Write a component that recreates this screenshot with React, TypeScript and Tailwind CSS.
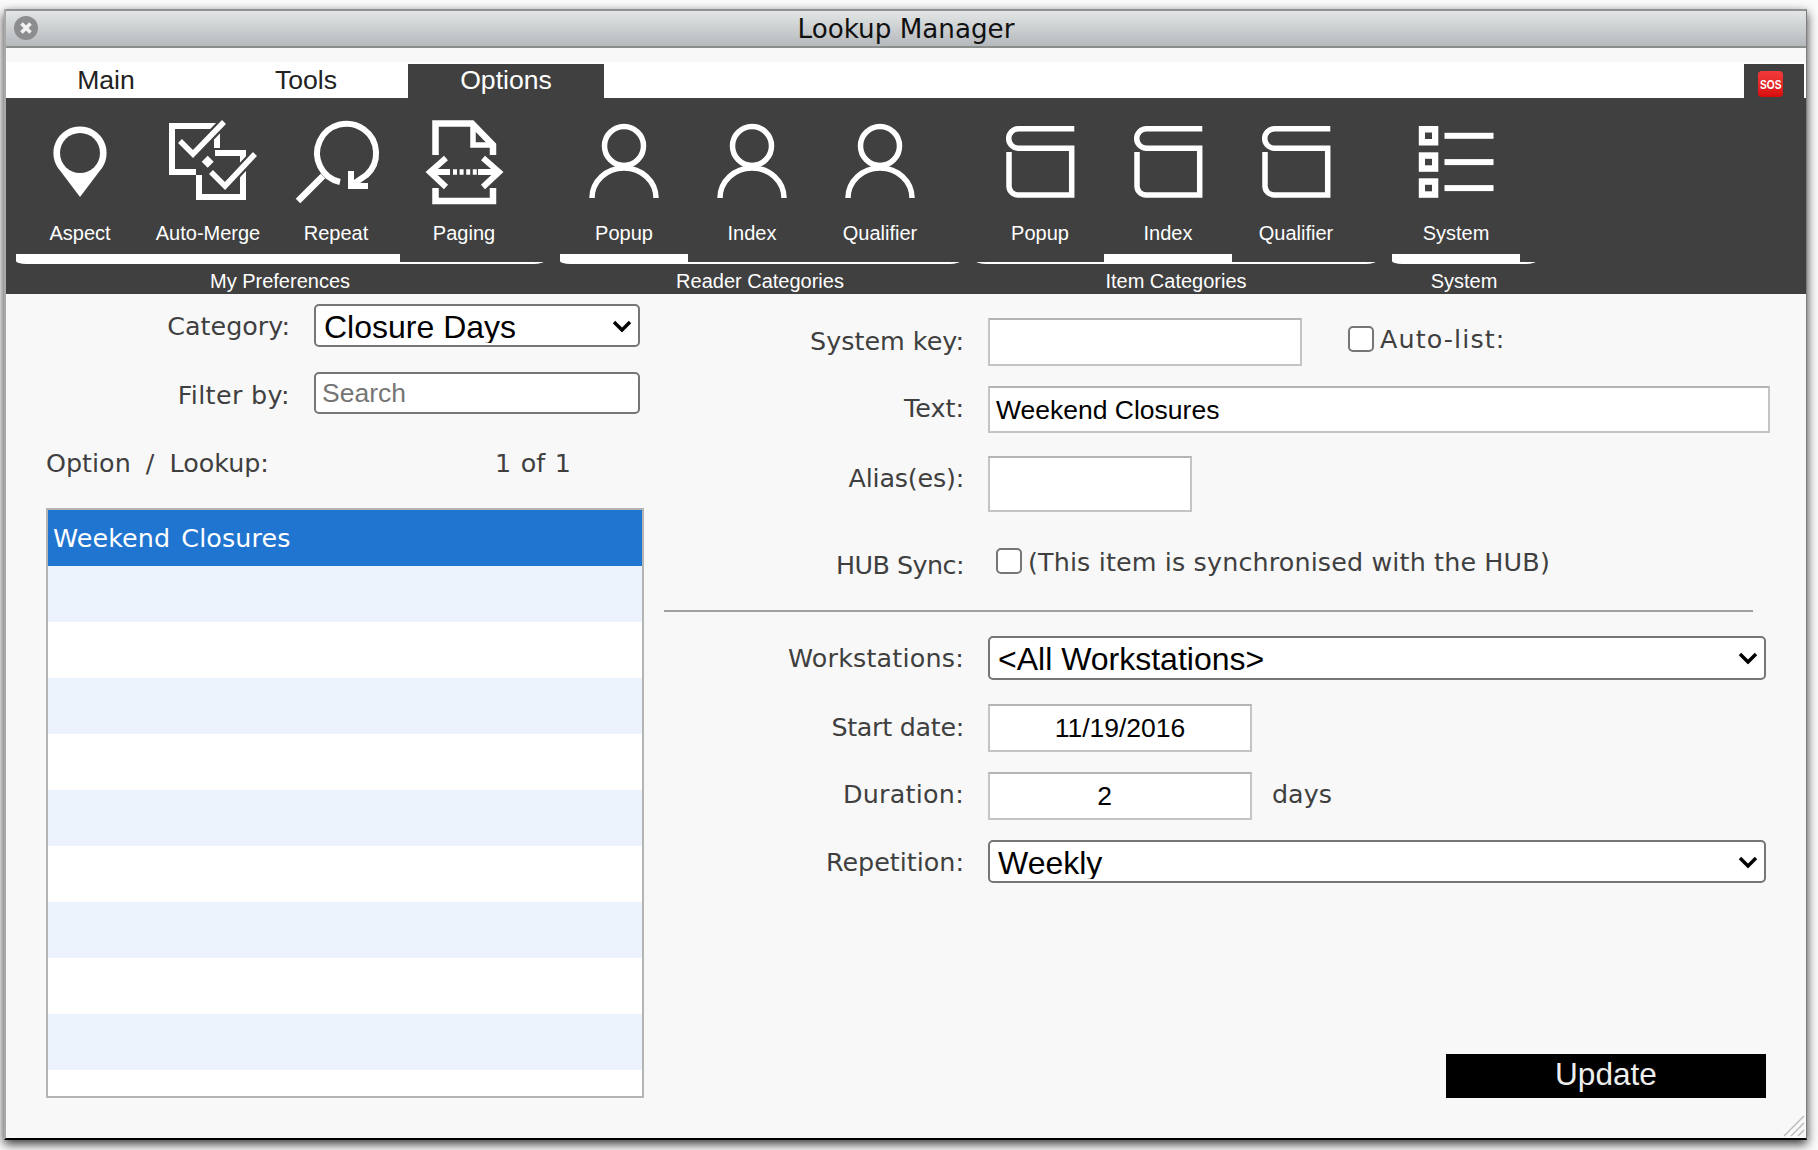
import { ReactNode } from "react";

const BG = "#404040";

const AspectIcon = () => (
  <>
    <path d="M64 8.5A26.5 26.5 0 0 1 84 52.5L64 79L44 52.5A26.5 26.5 0 0 1 64 8.5Z" fill="#fff" />
    <circle cx="64" cy="35" r="20" fill={BG} />
  </>
);

const MergeIcon = () => (
  <g fill="none" stroke="#fff" strokeWidth="6">
    <path d="M73 30V8H28V54H52" />
    <path d="M71 35H99V79H55V57" />
    <path d="M36 23L49 36L80 4" stroke={BG} strokeWidth="10" />
    <path d="M67 54L81 68L111 36" stroke={BG} strokeWidth="10" />
    <path d="M36 23L49 36L80 4" strokeWidth="5.5" />
    <path d="M67 54L81 68L111 36" strokeWidth="5.5" />
    <rect x="59.5" y="39.5" width="8.5" height="8.5" fill="#fff" stroke="none" transform="rotate(45 63.7 43.7)" />
  </g>
);

const RepeatIcon = () => (
  <g fill="none" stroke="#fff" strokeWidth="6">
    <path d="M68 64A29.5 29.5 0 1 1 94.5 57L80 67" />
    <path d="M79 53V68H96" />
    <path d="M51 58L26 83" strokeWidth="6.5" />
  </g>
);

const PagingIcon = () => (
  <g fill="none" stroke="#fff" strokeWidth="6.5">
    <path d="M35.5 37V5.5H72L93 27V37" />
    <path d="M35.5 70V83H93V70" />
    <path d="M73 5.5V27H93" strokeWidth="5.5" />
    <path d="M46 40L30 54L46 69" strokeWidth="6" />
    <path d="M83 40L99 54L83 69" strokeWidth="6" />
    <path d="M29 54H50M78 54H99" strokeWidth="6" />
    <path d="M53 54H77" strokeWidth="5.5" strokeDasharray="4 2.6" />
  </g>
);

const PersonIcon = () => (
  <g fill="none" stroke="#fff" strokeWidth="5.5">
    <circle cx="64" cy="28" r="19.5" />
    <path d="M32 80A32 30 0 0 1 96 80" />
  </g>
);

const WindowIcon = () => (
  <path
    d="M98.3 10.7H42.5A9.8 9.8 0 0 0 42.5 30.3H95.7V77H42A9 9 0 0 1 33 68V34"
    fill="none"
    stroke="#fff"
    strokeWidth="5.5"
  />
);

const ListIcon = () => (
  <g>
    {[8, 34.3, 60.3].map((y) => (
      <g key={y}>
        <rect x="26.8" y={y} width="19.5" height="19.5" fill="#fff" />
        <rect x="33" y={y + 6.5} width="7" height="6.5" fill={BG} />
        <rect x="52.5" y={y + 6.8} width="49" height="6" fill="#fff" />
      </g>
    ))}
  </g>
);

const groups = [
  {
    title: "My Preferences",
    tools: [
      { label: "Aspect", icon: <AspectIcon />, on: true },
      { label: "Auto-Merge", icon: <MergeIcon />, on: true },
      { label: "Repeat", icon: <RepeatIcon />, on: true },
      { label: "Paging", icon: <PagingIcon />, on: false },
    ],
  },
  {
    title: "Reader Categories",
    tools: [
      { label: "Popup", icon: <PersonIcon />, on: true },
      { label: "Index", icon: <PersonIcon />, on: false },
      { label: "Qualifier", icon: <PersonIcon />, on: false },
    ],
  },
  {
    title: "Item Categories",
    tools: [
      { label: "Popup", icon: <WindowIcon />, on: false },
      { label: "Index", icon: <WindowIcon />, on: true },
      { label: "Qualifier", icon: <WindowIcon />, on: false },
    ],
  },
  {
    title: "System",
    tools: [{ label: "System", icon: <ListIcon />, on: true }],
  },
];

const Chevron = () => (
  <svg
    className="pointer-events-none absolute right-[8px] top-1/2 -translate-y-1/2"
    width="20"
    height="13"
    viewBox="0 0 20 13"
  >
    <path d="M2 2.5L10 10.5L18 2.5" fill="none" stroke="#000" strokeWidth="3.4" />
  </svg>
);

const Select = ({ value, className }: { value: string; className: string }) => (
  <div className={`relative shrink-0 ${className}`}>
    <select
      defaultValue={value}
      className="h-full w-full appearance-none rounded-[5px] border-2 border-[#767676] bg-white pl-[8px] pt-[2px] font-['Liberation_Sans',sans-serif] text-[32px] leading-none text-black"
    >
      <option>{value}</option>
    </select>
    <Chevron />
  </div>
);

const Field = ({ value, className }: { value?: string; className: string }) => (
  <input
    readOnly
    value={value ?? ""}
    className={`shrink-0 border-2 border-[#c4c4c4] border-t-[#b4b4b4] bg-white font-['Liberation_Sans',sans-serif] text-[26.5px] text-black outline-none ${className}`}
  />
);

const Row = ({
  label,
  children,
  className,
  labelClass = "",
}: {
  label: string;
  children: ReactNode;
  className: string;
  labelClass?: string;
}) => (
  <div className={`flex items-center ${className}`}>
    <span className={`w-[300px] shrink-0 text-right ${labelClass}`}>{label}</span>
    <div className="ml-[24px] flex min-w-0 flex-1 items-center">{children}</div>
  </div>
);

const Checkbox = () => (
  <input type="checkbox" className="h-[26px] w-[26px] shrink-0 appearance-none rounded-[5px] border-2 border-[#767676] bg-white" />
);

export default function App() {
  return (
    <div className="h-[1150px] w-[1818px] overflow-hidden bg-[#fbfbfb] pl-[4px] pt-[9px]">
      <div className="relative flex h-[1131px] w-[1803px] flex-col border-b-2 border-l-2 border-r border-b-black border-l-[#a9a9a9] border-r-[#7d7d7d] bg-[#f8f8f8] shadow-[0_4px_10px_rgba(0,0,0,0.8)]">
        <div className="relative flex h-[39px] shrink-0 items-center justify-center border-y-2 border-t-[#8f9391] border-b-[#8a8f8c] bg-gradient-to-b from-[#e3e6e6] to-[#b6b9bc] pt-[2px] font-['DejaVu_Sans',sans-serif] text-[26.2px] text-[#111]">
          <svg className="absolute left-[8px] top-[4px]" width="24" height="26" viewBox="0 0 24 26">
            <circle cx="12" cy="13" r="12" fill="#8b8d8f" />
            <path d="M7.5 8.5L16.5 17.5M16.5 8.5L7.5 17.5" stroke="#f2f2f2" strokeWidth="3.6" />
          </svg>
          Lookup Manager
        </div>

        <div className="h-[14px] shrink-0" />

        <div className="flex h-[36px] shrink-0 items-end bg-white font-['Liberation_Sans',sans-serif] text-[26.6px] text-[#222]">
          <div className="flex h-[34px] w-[200px] items-center justify-center">Main</div>
          <div className="flex h-[34px] w-[200px] items-center justify-center">Tools</div>
          <div className="ml-[2px] flex h-[34px] w-[196px] items-center justify-center bg-[#404040] text-white">Options</div>
          <div className="flex-1" />
          <div className="mr-[2px] flex h-[34px] w-[60px] items-start bg-[#404040] pl-[14px] pt-[7px]">
            <div className="flex h-[26px] w-[25px] items-center justify-center rounded-[4px] bg-gradient-to-b from-[#f23a3a] to-[#d80a0a] font-bold text-white">
              <span className="inline-block scale-x-[0.78] text-[13px] leading-none">SOS</span>
            </div>
          </div>
        </div>

        <div className="flex h-[196px] shrink-0 gap-[16px] bg-[#404040] pl-[10px] font-['Liberation_Sans',sans-serif] text-[20px] text-white">
          {groups.map((group) => (
            <div key={group.title} className="flex flex-col">
              <div className="flex pr-[16px] pt-[20px]">
                {group.tools.map((tool) => (
                  <div key={tool.label} className="w-[128px]">
                    <svg className="block overflow-visible" width="128" height="80" viewBox="0 0 128 80">
                      {tool.icon}
                    </svg>
                    <div className="mt-[23px] h-[24px] text-center leading-[24px]">{tool.label}</div>
                  </div>
                ))}
              </div>
              <div className="mt-[9px] flex h-[10px] items-end overflow-hidden rounded-b-[10px_3px]">
                {group.tools.map((tool) => (
                  <div key={tool.label} className={tool.on ? "h-[10px] w-[128px] bg-white" : "h-[2px] w-[128px] bg-white"} />
                ))}
                <div className="h-[2px] flex-1 bg-white" />
              </div>
              <div className="pt-[5px] text-center leading-[24px]">{group.title}</div>
            </div>
          ))}
        </div>

        <div className="flex flex-1 font-['DejaVu_Sans',sans-serif] text-[25.4px] text-[#3f3f3f]">
          <div className="w-[658px] shrink-0 pt-[10px]">
            <div className="flex h-[43px] items-center">
              <span className="w-[284px] pt-[2px] text-right">Category:</span>
              <Select value="Closure Days" className="ml-[24px] h-full w-[326px]" />
            </div>
            <div className="mt-[25px] flex h-[42px] items-center">
              <span className="w-[284px] pt-[4px] text-right tracking-[0.35px]">Filter by:</span>
              <input
                placeholder="Search"
                className="ml-[24px] h-full w-[326px] rounded-[5px] border-2 border-[#767676] bg-white pl-[6px] font-['Liberation_Sans',sans-serif] text-[26.5px] text-black outline-none placeholder:text-[#757575]"
              />
            </div>
            <div className="ml-[40px] mt-[29px] flex h-[40px] items-center">
              <span className="w-[449px] [word-spacing:7px]">Option / Lookup:</span>
              <span className="[word-spacing:1.5px]">1 of 1</span>
            </div>
            <div className="ml-[40px] mt-[25px] h-[590px] w-[598px] overflow-hidden border-2 border-[#b4b4b4] bg-white">
              <div className="flex h-[56px] items-center bg-[#2075d0] pl-[5px] text-white tracking-[0.1px] [word-spacing:3px]">Weekend Closures</div>
              {[0, 1, 2, 3, 4, 5, 6, 7, 8].map((i) => (
                <div key={i} className={i % 2 === 0 ? "h-[56px] bg-[#ecf3fd]" : "h-[56px] bg-white"} />
              ))}
            </div>
          </div>

          <div className="min-w-0 flex-1 pr-[40px] pt-[24px]">
            <Row label="System key:" className="h-[48px]" labelClass="pb-[2px]">
              <Field className="h-[48px] w-[314px]" />
              <div className="ml-[46px] flex items-center gap-[6px] pb-[6px]">
                <Checkbox />
                <span className="tracking-[1.1px]">Auto-list:</span>
              </div>
            </Row>
            <Row label="Text:" className="mt-[20px] h-[47px]" labelClass="pb-[2px]">
              <Field value="Weekend Closures" className="h-[47px] w-[782px] pl-[6px] pt-[2px]" />
            </Row>
            <Row label="Alias(es):" className="mt-[23px] h-[56px]" labelClass="pb-[12px] tracking-[-0.2px]">
              <Field className="h-[56px] w-[204px]" />
            </Row>
            <div className="mt-[36px] flex h-[26px] items-center">
              <span className="w-[300px] shrink-0 pt-[8px] text-right tracking-[-0.55px]">HUB Sync:</span>
              <div className="ml-[32px] flex items-center gap-[6px]">
                <Checkbox />
                <span className="pt-[2px] tracking-[0.14px]">(This item is synchronised with the HUB)</span>
              </div>
            </div>
            <div className="mt-[36px] h-[2px] w-[1089px] bg-[#a0a0a0]" />
            <Row label="Workstations:" className="mt-[24px] h-[44px]" labelClass="pt-[1px] tracking-[0.2px]">
              <Select value="<All Workstations>" className="h-[44px] w-[778px]" />
            </Row>
            <Row label="Start date:" className="mt-[24px] h-[48px]" labelClass="pb-[2px] tracking-[-0.3px]">
              <Field value="11/19/2016" className="h-[48px] w-[264px] text-center" />
            </Row>
            <Row label="Duration:" className="mt-[20px] h-[48px]" labelClass="pb-[3px] tracking-[0.25px]">
              <Field value="2" className="h-[48px] w-[264px] pr-[31px] text-center" />
              <span className="ml-[20px] pb-[3px]">days</span>
            </Row>
            <Row label="Repetition:" className="mt-[20px] h-[43px]" labelClass="pt-[2px]">
              <Select value="Weekly" className="h-[43px] w-[778px]" />
            </Row>
            <div className="mt-[171px] flex justify-end">
              <button className="h-[44px] w-[320px] bg-black pb-[2px] font-['Liberation_Sans',sans-serif] text-[31.6px] leading-none text-[#eeeeee]">Update</button>
            </div>
          </div>
        </div>

        <svg className="absolute bottom-[1px] right-[1px]" width="22" height="22" viewBox="0 0 22 22">
          <path d="M1 21L21 1M8 21L21 8M15 21L21 15" stroke="#bdbdbd" strokeWidth="1.5" />
        </svg>
      </div>
    </div>
  );
}
